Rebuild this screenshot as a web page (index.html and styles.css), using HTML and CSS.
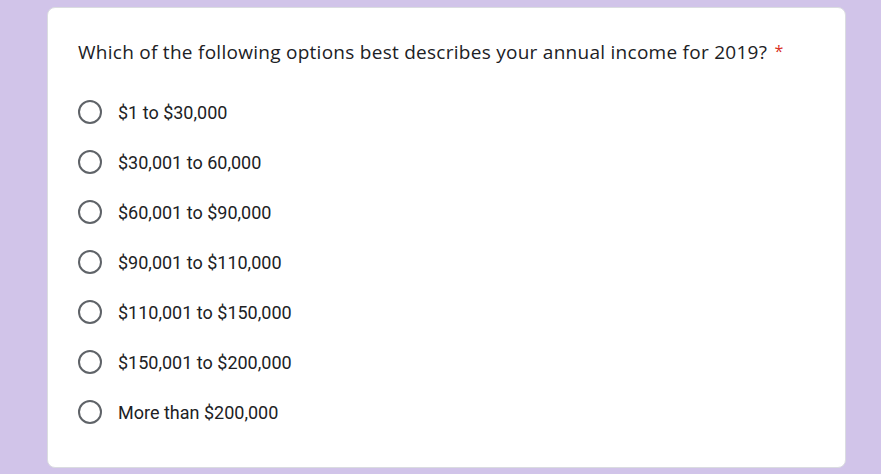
FILE: index.html
```html
<!DOCTYPE html>
<html>
<head>
<meta charset="utf-8">
<link rel="stylesheet" href="styles.css">
</head>
<body>
<div class="page">
  <div class="card">
    <div class="question">Which of the following options best describes your annual income for 2019? <span class="req">*</span></div>
    <div class="options">
      <label class="opt"><span class="radio"></span><span class="txt">$1 to $30,000</span></label>
      <label class="opt"><span class="radio"></span><span class="txt">$30,001 to 60,000</span></label>
      <label class="opt"><span class="radio"></span><span class="txt">$60,001 to $90,000</span></label>
      <label class="opt"><span class="radio"></span><span class="txt">$90,001 to $110,000</span></label>
      <label class="opt"><span class="radio"></span><span class="txt">$110,001 to $150,000</span></label>
      <label class="opt"><span class="radio"></span><span class="txt">$150,001 to $200,000</span></label>
      <label class="opt"><span class="radio"></span><span class="txt">More than $200,000</span></label>
    </div>
  </div>
</div>
</body>
</html>
```
FILE: styles.css
```css
html, body {
  margin: 0;
  padding: 0;
  background: #d1c4e9;
  height: 100%;
  overflow: hidden;
}
.page {
  padding: 7px 0 0 47px;
}
.card {
  width: 799px;
  height: 461px;
  background: #fff;
  border: 1px solid #dadce0;
  border-radius: 8px;
  box-sizing: border-box;
  padding: 30px 30px 0 30px;
}
.question {
  font-family: "Open Sans", "Noto Sans", sans-serif;
  font-size: 19px;
  line-height: 28px;
  color: #202124;
  letter-spacing: 0.27px;
}
.req {
  color: #d93025;
  font-size: 16px;
  line-height: 0;
  vertical-align: 2px;
  margin-left: 2px;
}
.options {
  display: flex;
  flex-direction: column;
  margin-top: 21px;
}
.opt {
  display: flex;
  align-items: center;
  height: 50px;
  font-family: Roboto, "Liberation Sans", sans-serif;
  font-size: 18px;
  color: #202124;
}
.radio {
  width: 24px;
  height: 24px;
  border: 2px solid #5f6368;
  border-radius: 50%;
  box-sizing: border-box;
  margin: 0 16px 0 0;
}
```
